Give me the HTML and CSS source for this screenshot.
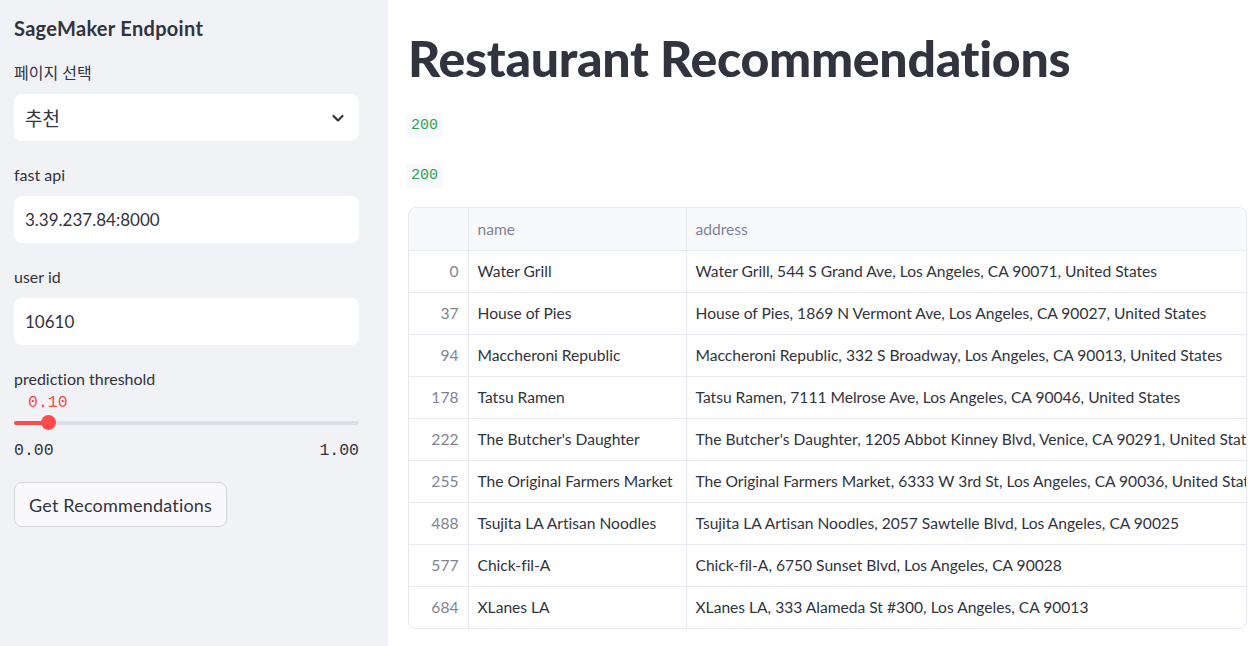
FILE: index.html
```html
<!DOCTYPE html>
<html lang="ko">
<head>
<meta charset="utf-8">
<link rel="stylesheet" href="styles.css">
</head>
<body>
<aside class="sidebar">
  <div class="side-title">SageMaker Endpoint</div>
  <div class="field">
    <div class="label">페이지 선택</div>
    <div class="select">
      <span>추천</span>
      <svg class="chev" width="14" height="14" viewBox="0 0 14 14"><path d="M2.5 5 L7 9.5 L11.5 5" fill="none" stroke="#31333f" stroke-width="2.2" stroke-linecap="round" stroke-linejoin="round"/></svg>
    </div>
  </div>
  <div class="field">
    <div class="label">fast api</div>
    <div class="input">3.39.237.84:8000</div>
  </div>
  <div class="field">
    <div class="label">user id</div>
    <div class="input">10610</div>
  </div>
  <div class="field slider-field">
    <div class="label">prediction threshold</div>
    <div class="slider-value">0.10</div>
    <div class="track"><div class="fill"></div><div class="thumb"></div></div>
    <div class="range"><span>0.00</span><span>1.00</span></div>
  </div>
  <button class="btn">Get Recommendations</button>
</aside>
<main class="main">
  <h1 class="title">Restaurant Recommendations</h1>
  <div class="code-row"><code class="badge">200</code></div>
  <div class="code-row"><code class="badge">200</code></div>
  <div class="table-wrap">
    <table class="df">
      <colgroup><col class="c-idx"><col class="c-name"><col class="c-addr"></colgroup>
      <thead><tr><th></th><th>name</th><th>address</th></tr></thead>
      <tbody>
        <tr><td class="idx">0</td><td>Water Grill</td><td>Water Grill, 544 S Grand Ave, Los Angeles, CA 90071, United States</td></tr>
        <tr><td class="idx">37</td><td>House of Pies</td><td>House of Pies, 1869 N Vermont Ave, Los Angeles, CA 90027, United States</td></tr>
        <tr><td class="idx">94</td><td>Maccheroni Republic</td><td>Maccheroni Republic, 332 S Broadway, Los Angeles, CA 90013, United States</td></tr>
        <tr><td class="idx">178</td><td>Tatsu Ramen</td><td>Tatsu Ramen, 7111 Melrose Ave, Los Angeles, CA 90046, United States</td></tr>
        <tr><td class="idx">222</td><td>The Butcher's Daughter</td><td>The Butcher's Daughter, 1205 Abbot Kinney Blvd, Venice, CA 90291, United States</td></tr>
        <tr><td class="idx">255</td><td>The Original Farmers Market</td><td>The Original Farmers Market, 6333 W 3rd St, Los Angeles, CA 90036, United States</td></tr>
        <tr><td class="idx">488</td><td>Tsujita LA Artisan Noodles</td><td>Tsujita LA Artisan Noodles, 2057 Sawtelle Blvd, Los Angeles, CA 90025</td></tr>
        <tr><td class="idx">577</td><td>Chick-fil-A</td><td>Chick-fil-A, 6750 Sunset Blvd, Los Angeles, CA 90028</td></tr>
        <tr><td class="idx">684</td><td>XLanes LA</td><td>XLanes LA, 333 Alameda St #300, Los Angeles, CA 90013</td></tr>
      </tbody>
    </table>
  </div>
</main>
</body>
</html>
```
FILE: styles.css
```css
* { box-sizing: border-box; }
html, body { margin: 0; padding: 0; height: 100%; }
body {
  display: flex;
  font-family: "Lato", "Noto Sans CJK KR", sans-serif;
  font-variant-ligatures: none;
  color: #31333f;
  background: #fff;
  overflow: hidden;
}
.sidebar {
  width: 388px;
  flex: 0 0 388px;
  background: #f0f2f6;
  padding: 14px 29px 0 14px;
  display: flex;
  flex-direction: column;
  align-items: stretch;
}
.side-title {
  font-size: 20px;
  font-weight: 700;
  letter-spacing: 0.3px;
  line-height: 28px;
  height: 28px;
}
.label {
  font-size: 16px;
  line-height: 22px;
  margin-bottom: 10px;
}
.field { display: flex; flex-direction: column; }
.field:nth-of-type(2) { margin-top: 20px; }
.field + .field { margin-top: 23px; }
.select, .input {
  height: 47px;
  background: #fff;
  border-radius: 8px;
  display: flex;
  align-items: center;
  padding: 0 11px;
  font-size: 17px;
}
.select { justify-content: space-between; padding-right: 14px; font-family: "Noto Sans CJK KR", sans-serif; font-size: 19px; }
.slider-field .label { margin-bottom: 0; }
.slider-value {
  font-family: "Liberation Mono", monospace;
  color: #ff4b4b;
  font-size: 16.5px;
  line-height: 22px;
  padding-left: 14px;
  margin-top: 2px;
}
.track {
  position: relative;
  height: 4px;
  margin-top: 7px;
  background: #dcdee5;
  border-radius: 2px;
}
.fill {
  width: 34px;
  height: 4px;
  background: #ff4b4b;
  border-radius: 2px;
}
.thumb {
  position: absolute;
  left: 27px;
  top: -6px;
  width: 15px;
  height: 15px;
  border-radius: 50%;
  background: #ff4b4b;
}
.range {
  display: flex;
  justify-content: space-between;
  font-family: "Liberation Mono", monospace;
  font-size: 16.5px;
  line-height: 22px;
  margin-top: 15px;
}
.btn {
  align-self: flex-start;
  margin-top: 20px;
  height: 45px;
  padding: 0 14px 0 14px;
  background: #f9f9fb;
  border: 1px solid #d5d6dc;
  border-radius: 8px;
  font-family: "Lato", sans-serif;
  font-size: 18px;
  letter-spacing: 0.2px;
  color: #31333f;
}
.main {
  flex: 1;
  padding: 28px 0 0 20px;
  min-width: 0;
}
.title {
  margin: 0;
  font-size: 50px;
  line-height: 60px;
  font-weight: 900;
  letter-spacing: -0.3px;
  color: #31333f;
}
.code-row { height: 24px; margin-bottom: 26px; }
.code-row:first-of-type { margin-top: 25px; }
.badge {
  display: inline-block;
  margin-left: -2px;
  height: 24px;
  line-height: 24px;
  padding: 0 5px;
  background: #f8f9fb;
  border-radius: 4px;
  color: #2ba44f;
  font-family: "Liberation Mono", monospace;
  font-size: 15px;
}
.table-wrap {
  margin-top: -6px;
  width: 839px;
  border: 1px solid #e6e9ef;
  border-radius: 8px;
  overflow: hidden;
}
.df {
  table-layout: fixed;
  border-collapse: collapse;
  width: 1000px;
  font-size: 15.6px;
  letter-spacing: 0;
}
.c-idx { width: 59px; }
.c-name { width: 218px; }
.c-addr { width: 723px; }
.df th, .df td {
  height: 42px;
  padding: 0 9px;
  white-space: nowrap;
  overflow: hidden;
  text-align: left;
  border-bottom: 1px solid #e6e9ef;
  border-right: 1px solid #e6e9ef;
}
.df th {
  background: #f8f9fb;
  font-weight: 400;
  color: #808495;
}
.df tbody tr:last-child td { border-bottom: none; }
.df td.idx { text-align: right; color: #808495; }
```
